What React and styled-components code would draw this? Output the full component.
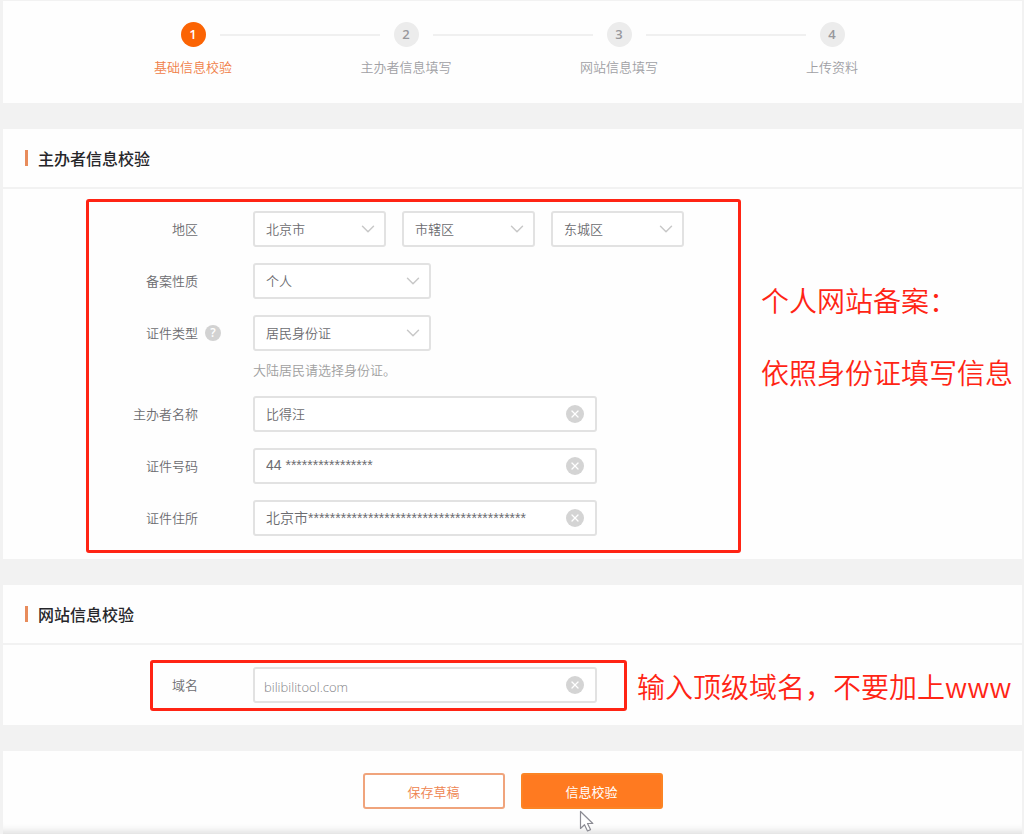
import React, { useState } from 'react';
import styled, { createGlobalStyle } from 'styled-components';
import { ChevronDown, X } from 'lucide-react';

const GlobalStyle = createGlobalStyle`
  * {
    box-sizing: border-box;
  }

  body {
    margin: 0;
    background-color: #f2f2f2;
    font-family: 'Noto Sans CJK SC', sans-serif;
    font-size: 13px;
    font-weight: 350;
    color: #6c6c70;
  }

  button, input, select {
    font-family: inherit;
    font-size: inherit;
    font-weight: inherit;
    color: inherit;
  }
`;

const Page = styled.form`
  display: flex;
  flex-direction: column;
  gap: 26px;
  min-height: 100vh;
  padding: 1px 2px 0 3px;
`;

const Card = styled.section`
  background-color: #fefefe;
`;

const StepList = styled.ol`
  display: grid;
  grid-template-columns: repeat(4, 1fr);
  max-width: 852px;
  margin: 0 auto;
  padding: 21px 0 26px;
  list-style: none;
`;

const Step = styled.li`
  display: flex;
  flex-direction: column;
  gap: 10px;
  line-height: 20px;
  text-align: center;
  color: ${(props) => (props.$active ? '#f08048' : '#a0a0a4')};
`;

const StepMarker = styled.div`
  display: flex;
  align-items: center;
  gap: 14px;

  &::before,
  &::after {
    content: '';
    flex: 1;
    height: 2px;
    background-color: #f0f0f0;
  }

  ${Step}:first-child &::before,
  ${Step}:last-child &::after {
    background-color: transparent;
  }
`;

const StepNumber = styled.span`
  width: 25px;
  height: 25px;
  border-radius: 50%;
  background-color: ${(props) => (props.$active ? '#fb6404' : '#ececec')};
  color: ${(props) => (props.$active ? '#fff' : '#98989c')};
  font-family: 'Open Sans', sans-serif;
  font-weight: 600;
  line-height: 25px;
`;

const CardHeader = styled.header`
  display: flex;
  align-items: center;
  gap: 10px;
  height: 60px;
  padding-left: 22px;
  border-bottom: 2px solid #f2f2f2;

  &::before {
    content: '';
    width: 3px;
    height: 16px;
    background-color: #e88c5c;
  }
`;

const CardTitle = styled.h2`
  margin: 0;
  font-size: 16px;
  font-weight: 500;
  line-height: 24px;
  color: #26262a;
`;

const OwnerBody = styled.div`
  display: flex;
  align-items: flex-start;
  gap: 20px;
  padding: 10px 0 6px 83px;
`;

const SiteBody = styled.div`
  display: flex;
  align-items: center;
  gap: 10px;
  padding: 15px 0 14px 147px;
`;

const Highlight = styled.div`
  display: flex;
  flex-direction: column;
  flex-shrink: 0;
  gap: 16px;
  padding: ${(props) => (props.$compact ? '4px 27px 5px 0' : '9px 54px 14px 0')};
  border: 3px solid #ff2414;
  border-radius: 3px;
`;

const Note = styled.p`
  margin: 0;
  font-size: 28px;
  line-height: 36px;
  color: #ff2414;
  white-space: nowrap;
`;

const NoteGroup = styled.div`
  display: flex;
  flex-direction: column;
  gap: 36px;
  padding-top: 83px;
`;

const Row = styled.div`
  display: grid;
  grid-template-columns: ${(props) => (props.$compact ? '45px' : '109px')} 55px 1fr;
  line-height: 35px;
`;

const Label = styled.label`
  text-align: right;
  white-space: nowrap;
`;

const HelpSlot = styled.div`
  display: flex;
  align-items: center;
  height: 35px;
  padding-left: 7px;
`;

const HelpButton = styled.button`
  width: 16px;
  height: 16px;
  padding: 0;
  border: 0;
  border-radius: 50%;
  background-color: #d2d2d2;
  color: #fff;
  font-family: 'Open Sans', sans-serif;
  font-size: 12px;
  font-weight: 600;
  line-height: 16px;
`;

const Controls = styled.div`
  display: flex;
  gap: 16px;
`;

const Stack = styled.div`
  display: flex;
  flex-direction: column;
  gap: 8px;
`;

const Hint = styled.p`
  margin: 0;
  line-height: 21px;
  color: #a0a0a0;
`;

/* control and its icon share one grid cell */
const Field = styled.div`
  display: grid;
  align-items: center;
  width: ${(props) => props.$width}px;

  > * {
    grid-area: 1 / 1;
  }
`;

const Select = styled.select`
  width: 100%;
  height: 36px;
  padding: 0 36px 2px 11px;
  border: 2px solid #e2e2e2;
  border-radius: 3px;
  background-color: #fff;
  appearance: none;
`;

const Arrow = styled(ChevronDown)`
  justify-self: end;
  margin-right: 7px;
  color: #c8c8c8;
  pointer-events: none;
`;

const Input = styled.input`
  width: 100%;
  height: 36px;
  padding: 0 36px 2px 11px;
  border: 2px solid #e2e2e2;
  border-radius: 3px;
  background-color: #fff;

  &[name='idNumber'],
  &[name='address'] {
    font-family: 'Liberation Sans', 'Noto Sans CJK SC', sans-serif;
    font-size: 14px;
  }

  &[name='domain'] {
    padding: 4px 36px 0 9px;
    font-family: 'Open Sans', sans-serif;
    font-weight: 300;
    color: #848488;
  }
`;

const ClearButton = styled.button`
  display: flex;
  align-items: center;
  justify-content: center;
  justify-self: end;
  width: 18px;
  height: 18px;
  margin-right: 13px;
  padding: 0;
  border: 0;
  border-radius: 50%;
  background-color: #d4d4d4;
  color: #fff;
`;

const Footer = styled(Card)`
  display: flex;
  flex: 1;
  align-items: flex-start;
  justify-content: center;
  gap: 16px;
  padding: 22px 0 25px;
  box-shadow: inset 0 -10px 8px -8px #d8d8d8;
`;

const Button = styled.button`
  position: relative;
  width: 142px;
  height: 36px;
  padding: 0;
  border: 2px solid ${(props) => (props.$primary ? '#fb8424' : '#f0a47c')};
  border-radius: 3px;
  background-color: ${(props) => (props.$primary ? '#ff7a20' : '#fff')};
  color: ${(props) => (props.$primary ? '#fff' : '#ee8450')};
  font-weight: ${(props) => (props.$primary ? 400 : 350)};
`;

const Pointer = styled.svg`
  position: absolute;
  top: 35px;
  left: 56px;
`;

const steps = ['基础信息校验', '主办者信息填写', '网站信息填写', '上传资料'];

const SelectField = ({ id, width, options, label }) => (
  <Field $width={width}>
    <Select id={id} name={id} aria-label={label}>
      {options.map((option) => (
        <option key={option}>{option}</option>
      ))}
    </Select>
    <Arrow size={22} strokeWidth={1.6} />
  </Field>
);

const TextField = ({ id, initial }) => {
  const [value, setValue] = useState(initial);

  return (
    <Field $width={344}>
      <Input
        id={id}
        name={id}
        type="text"
        autoComplete="off"
        value={value}
        onChange={(e) => setValue(e.target.value)}
      />
      <ClearButton type="button" aria-label="清空" onClick={() => setValue('')}>
        <X size={12} strokeWidth={2.6} />
      </ClearButton>
    </Field>
  );
};

const FormRow = ({ id, label, help, compact, children }) => (
  <Row $compact={compact}>
    <Label htmlFor={id}>{label}</Label>
    <HelpSlot>{help && <HelpButton type="button">?</HelpButton>}</HelpSlot>
    <Controls>{children}</Controls>
  </Row>
);

const App = () => {
  return (
    <>
      <GlobalStyle />
      <Page onSubmit={(e) => e.preventDefault()}>
        <Card>
          <StepList>
            {steps.map((step, index) => (
              <Step key={step} $active={index === 0}>
                <StepMarker>
                  <StepNumber $active={index === 0}>{index + 1}</StepNumber>
                </StepMarker>
                {step}
              </Step>
            ))}
          </StepList>
        </Card>

        <Card>
          <CardHeader>
            <CardTitle>主办者信息校验</CardTitle>
          </CardHeader>
          <OwnerBody>
            <Highlight>
              <FormRow id="province" label="地区">
                <SelectField id="province" width={133} options={['北京市']} />
                <SelectField id="city" width={133} options={['市辖区']} label="城市" />
                <SelectField id="district" width={133} options={['东城区']} label="区县" />
              </FormRow>
              <FormRow id="nature" label="备案性质">
                <SelectField id="nature" width={178} options={['个人']} />
              </FormRow>
              <FormRow id="idType" label="证件类型" help>
                <Stack>
                  <SelectField id="idType" width={178} options={['居民身份证']} />
                  <Hint>大陆居民请选择身份证。</Hint>
                </Stack>
              </FormRow>
              <FormRow id="ownerName" label="主办者名称">
                <TextField id="ownerName" initial="比得汪" />
              </FormRow>
              <FormRow id="idNumber" label="证件号码">
                <TextField id="idNumber" initial={`44 ${'*'.repeat(16)}`} />
              </FormRow>
              <FormRow id="address" label="证件住所">
                <TextField id="address" initial={`北京市${'*'.repeat(40)}`} />
              </FormRow>
            </Highlight>
            <NoteGroup>
              <Note>个人网站备案：</Note>
              <Note>依照身份证填写信息</Note>
            </NoteGroup>
          </OwnerBody>
        </Card>

        <Card>
          <CardHeader>
            <CardTitle>网站信息校验</CardTitle>
          </CardHeader>
          <SiteBody>
            <Highlight $compact>
              <FormRow id="domain" label="域名" compact>
                <TextField id="domain" initial="bilibilitool.com" />
              </FormRow>
            </Highlight>
            <Note>输入顶级域名，不要加上www</Note>
          </SiteBody>
        </Card>

        <Footer>
          <Button type="button">保存草稿</Button>
          <Button type="submit" $primary>
            信息校验
            <Pointer width="16" height="23" viewBox="0 0 16 23" aria-hidden="true">
              <path
                d="M1.5 1.5v17l4-3.8 3 6.3 3-1.4-3-6.1h5.3z"
                fill="#fff"
                stroke="#8c8c94"
                strokeWidth="1.2"
                strokeLinejoin="round"
              />
            </Pointer>
          </Button>
        </Footer>
      </Page>
    </>
  );
};

export default App;
